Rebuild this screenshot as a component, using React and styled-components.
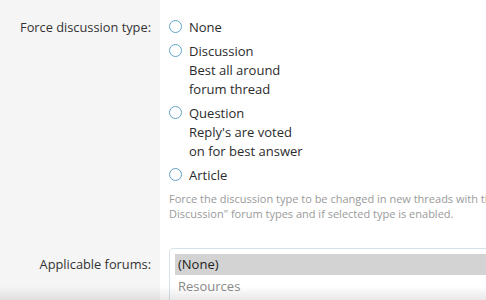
import styled, { createGlobalStyle } from 'styled-components';

const GlobalStyle = createGlobalStyle`
  html, body {
    margin: 0;
    padding: 0;
    background: #fff;
  }
  body {
    font-family: "Open Sans", "Liberation Sans", sans-serif;
    color: #2b2b2b;
    overflow: hidden;
  }
`;

const Page = styled.div`
  position: relative;
  width: 486px;
  height: 300px;
  overflow: hidden;
`;

const Row = styled.div`
  display: grid;
  grid-template-columns: 160px 1fr;
`;

const Label = styled.div`
  background: #f5f5f5;
  text-align: right;
  padding: ${(p) => p.$top}px 9px 0 0;
  font-size: 12.8px;
  line-height: 19px;
  color: #333;
  white-space: nowrap;
  height: ${(p) => p.$height}px;
`;

const Content = styled.div`
  padding: ${(p) => p.$top}px 0 0 9px;
`;

const RadioList = styled.div`
  display: flex;
  flex-direction: column;
  gap: 5px;
`;

const RadioItem = styled.label`
  display: flex;
  align-items: flex-start;
  gap: 7px;
  font-size: 13px;
  line-height: 19px;
  color: #2b2b2b;
`;

const Circle = styled.span`
  flex: none;
  width: 11px;
  height: 11px;
  margin-top: 2px;
  border: 1.6px solid #62a3c6;
  border-radius: 50%;
  background: #fff;
`;

const Hint = styled.div`
  margin-top: 6px;
  font-size: 11px;
  line-height: 15px;
  color: #9a9a9a;
  white-space: nowrap;
`;

const SelectBox = styled.div`
  width: 330px;
  border: 1px solid #d6e2ea;
  border-radius: 4px;
  padding: 5px;
  background: #fff;
`;

const Option = styled.div`
  padding: 1px 3px;
  font-size: 13px;
  line-height: 19px;
  color: ${(p) => (p.$selected ? '#222' : '#8a8a8a')};
  background: ${(p) => (p.$selected ? '#d3d3d3' : 'transparent')};
  margin-bottom: 1px;
`;

const BottomShade = styled.div`
  position: absolute;
  left: 0;
  right: 0;
  bottom: 0;
  height: 14px;
  background: linear-gradient(to bottom, rgba(0, 0, 0, 0), rgba(0, 0, 0, 0.09));
  pointer-events: none;
`;

const types = [
  { name: 'None' },
  { name: 'Discussion', lines: ['Best all around', 'forum thread'] },
  { name: 'Question', lines: ["Reply's are voted", 'on for best answer'] },
  { name: 'Article' },
];

const App = () => (
  <Page>
    <GlobalStyle />
    <Row>
      <Label $top={18} $height={230}>Force discussion type:</Label>
      <Content $top={18}>
        <RadioList>
          {types.map((t) => (
            <RadioItem key={t.name}>
              <Circle />
              <div>
                {t.name}
                {t.lines && t.lines.map((l) => <div key={l}>{l}</div>)}
              </div>
            </RadioItem>
          ))}
        </RadioList>
        <Hint>
          Force the discussion type to be changed in new threads with the "General
          <br />
          Discussion" forum types and if selected type is enabled.
        </Hint>
      </Content>
    </Row>
    <Row>
      <Label $top={7} $height={80}>Applicable forums:</Label>
      <Content $top={0}>
        <SelectBox>
          <Option $selected>(None)</Option>
          <Option>Resources</Option>
        </SelectBox>
      </Content>
    </Row>
    <BottomShade />
  </Page>
);

export default App;
